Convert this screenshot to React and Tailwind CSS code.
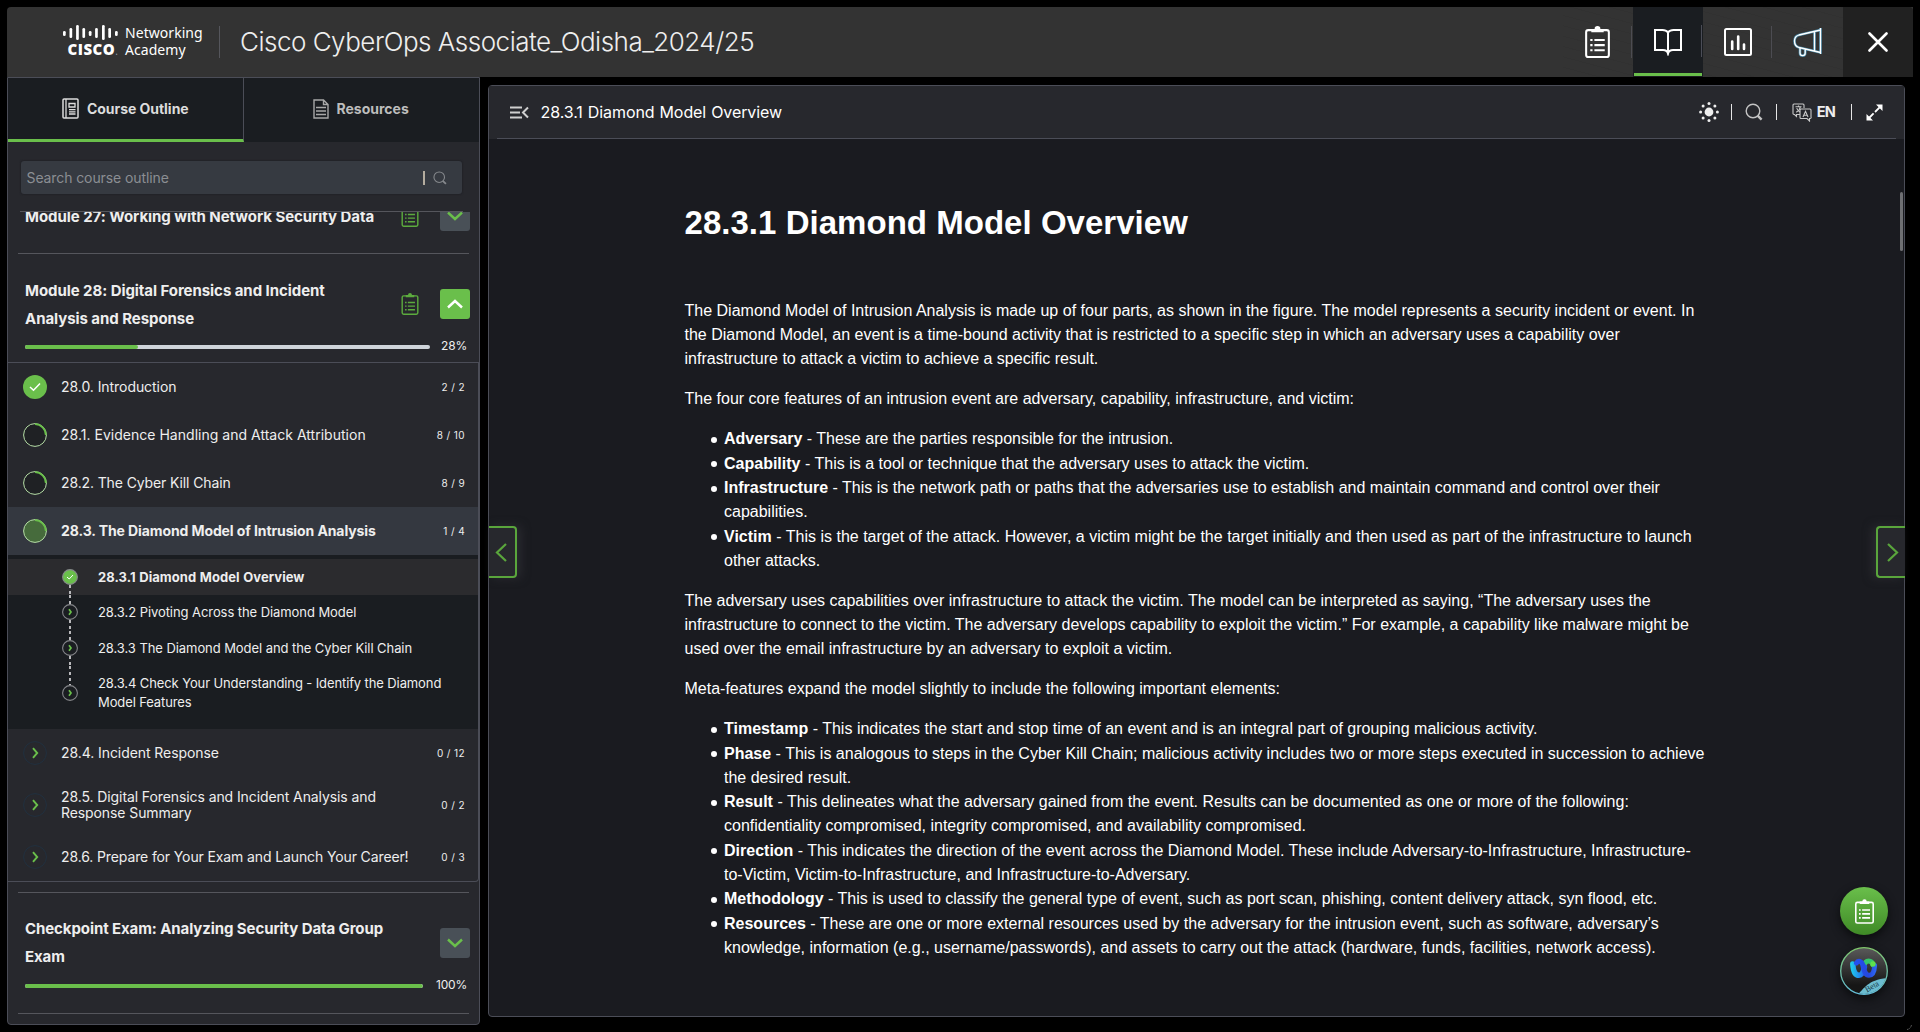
const NETACAD_BARS = [
  [0, 6, 5], [6.5, 3, 10], [13.1, 0, 15], [19.4, 3, 10], [25.8, 6, 5],
  [32.1, 3, 10], [39, 0, 15], [45.3, 3, 10], [52, 6, 5],
];

function CiscoLogo() {
  return (
    <div className="flex h-[34px] w-[142px] items-start text-white">
      <div className="flex w-[62px] shrink-0 flex-col items-start">
        <svg width="56" height="16" viewBox="0 0 56 16" fill="#fff">
          {NETACAD_BARS.map(([x, y, h]) => (
            <rect key={x} x={x} y={y} width="2.7" height={h} rx="1.3" />
          ))}
        </svg>
        <div className="mt-[1px] ml-[4.5px] flex items-baseline font-['Open_Sans',sans-serif] text-[15px] leading-[15px] font-extrabold tracking-[0.5px]">
          CISCO<span className="text-[10px] font-normal text-gray-400">.</span>
        </div>
      </div>
      <div className="-mt-[1px] font-['Noto_Sans','Open_Sans',sans-serif] text-[14px] leading-[17px] tracking-[0.05px]">
        Networking
        <br />
        Academy
      </div>
    </div>
  );
}

function Clipboard({ className = '', width = 18, height = 22, stroke = 'currentColor' }) {
  return (
    <svg className={className} width={width} height={height} viewBox="0 0 24 31" fill="none" stroke={stroke} strokeWidth="2">
      <rect x="1" y="4" width="22" height="26" rx="2" />
      <path d="M6 2.8H9.2A2.8 2.8 0 0 1 14.8 2.8H18V6H6Z" fill={stroke} stroke="none" />
      <path d="M9 13.5H19M9 18.5H19M9 23.5H19" />
      <path d="M5 13.5H7.2M5 18.5H7.2M5 23.5H7.2" />
    </svg>
  );
}

function Search({ size, stroke, className = '' }) {
  return (
    <svg className={className} width={size} height={size} viewBox="0 0 18 18" fill="none" stroke={stroke} strokeWidth="1.4">
      <circle cx="8" cy="8" r="6.8" />
      <path d="M12.6 12.6L16.6 16.6" strokeWidth="2.4" />
    </svg>
  );
}

const MEGAPHONE = 'M27.5 1V27M27.5 3L6 8C2.5 9 1.5 11 1.5 14S2.5 19.5 6 20.5L27.5 25.5M21.5 4.5V24M7 21V26A2.6 2.6 0 0 0 12.2 26V22';

function Header() {
  return (
    <header className="flex h-[70px] shrink-0 items-stretch rounded-t-[4px] bg-[#333333]">
      <div className="flex flex-1 items-center">
        <div className="ml-[56px]"><CiscoLogo /></div>
        <div className="ml-[14px] h-8 w-px bg-[#55565c]" />
        <h1 className="ml-[20px] text-[26px] leading-none font-[330] tracking-[-0.5px] whitespace-nowrap text-[#eeeeee]">
          Cisco CyberOps Associate_Odisha_2024/25
        </h1>
      </div>
      <nav className="flex bg-[repeating-linear-gradient(15deg,#333333_0_9px,#313131_9px_10px)] text-white">
        <div className="flex w-[68px] items-center justify-center">
          <Clipboard width={25} height={32} />
        </div>
        <div className="my-[19px] mr-px w-px bg-[#4c4c52]" />
        <div className="flex w-[70px] flex-col bg-[#1a1d21]">
          <div className="flex flex-1 items-center pt-[3px]">
            <svg className="ml-[20px]" width="30" height="28" viewBox="0 0 30 28" fill="none" stroke="#fff" strokeWidth="2">
              <path d="M15 4.5C13.5 2.6 11.5 2 9.5 2H2V22H10C12.5 22 14.2 22.8 15 25.5C15.8 22.8 17.5 22 20 22H28V2H20.5C18.5 2 16.5 2.6 15 4.5ZM15 4.5V26.5" />
            </svg>
            <div className="-mt-[1px] mr-px ml-auto h-8 w-px bg-[#4b4d57]" />
          </div>
          <div className="mx-px mb-px h-[3px] bg-[#6abf4b]" />
        </div>
        <div className="flex w-[68px] items-center justify-center pl-[2px]">
          <svg width="28" height="28" viewBox="0 0 28 28" fill="none" stroke="#fff">
            <rect x="1" y="1" width="26" height="26" rx="1.5" strokeWidth="2" />
            <path d="M8.2 13.5V21M14.2 8.5V21M20 16.5V21" strokeWidth="2.6" strokeLinecap="round" />
          </svg>
        </div>
        <div className="my-[19px] w-px bg-[#4c4c52]" />
        <div className="flex w-[71px] items-center justify-center">
          <svg width="30" height="30" viewBox="0 0 30 30" fill="none" strokeLinejoin="round">
            <path d={MEGAPHONE} stroke="#4a8aa8" strokeWidth="2.7" />
            <path d={MEGAPHONE} stroke="#fff" strokeWidth="1.3" />
          </svg>
        </div>
        <div className="flex w-[70px] items-center justify-center rounded-tr-[4px] bg-[#212121]">
          <svg width="20" height="20" viewBox="0 0 20 20" stroke="#fff" strokeWidth="2.6" strokeLinecap="round">
            <path d="M1.5 1.5L18.5 18.5M18.5 1.5L1.5 18.5" />
          </svg>
        </div>
      </nav>
    </header>
  );
}

function Toggle({ open, className = '' }) {
  return (
    <div className={`flex h-[30px] w-[30px] shrink-0 items-center justify-center rounded-[3px] ${open ? 'bg-[#6abf4b]' : 'bg-[#495057]'} ${className}`}>
      <svg width="16" height="10" viewBox="0 0 16 10" fill="none" stroke={open ? '#fff' : '#6abf4b'} strokeWidth="2.4">
        <path d={open ? 'M1 8.5L8 2L15 8.5' : 'M1 1.5L8 8L15 1.5'} />
      </svg>
    </div>
  );
}

function Ring({ state }) {
  if (state === 'done') {
    return (
      <svg width="24" height="24" viewBox="0 0 24 24">
        <circle cx="12" cy="12" r="12" fill="#6abf4b" />
        <path d="M7 12L10.5 15.3L17 8.5" fill="none" stroke="#fff" strokeWidth="1.5" />
      </svg>
    );
  }
  if (state === 'next') {
    return (
      <svg width="24" height="24" viewBox="0 0 24 24" fill="none">
        <circle cx="12" cy="12" r="11.4" stroke="#21303f" />
        <path d="M10 7.2L14.2 12L10 16.8" stroke="#6abf4b" strokeWidth="1.9" />
      </svg>
    );
  }
  return (
    <svg width="24" height="24" viewBox="0 0 24 24">
      <circle cx="12" cy="12" r="11.4" fill={state === 'active' ? '#466b3c' : '#1f2124'} stroke="#b5dda6" strokeWidth="1" />
      <path d="M12 1.2A10.8 10.8 0 0 1 22.8 12" fill="none" stroke="#6abf4b" strokeWidth="1.8" />
    </svg>
  );
}

function Section({ state, title, count, tall, tracking = 'tracking-[-0.09px]' }) {
  const active = state === 'active';
  return (
    <div className={`flex shrink-0 items-center pr-[13px] pl-[15px] ${tall ? 'h-[56px]' : 'h-[48px]'} ${active ? 'bg-[#343840]' : ''}`}>
      <Ring state={state} />
      <div className={`ml-[14px] flex-1 text-[14px] leading-[16px] whitespace-nowrap ${active ? 'font-bold' : ''} ${tracking}`}>{title}</div>
      <div className="text-[10px] tracking-[0.4px]">{count}</div>
    </div>
  );
}

const DASH = 'w-[2px] bg-[repeating-linear-gradient(to_bottom,#b8b8bb_0_3px,transparent_3px_6px)]';

function Lesson({ title, done, last, tracking = 'tracking-[-0.07px]' }) {
  const height = done ? 'h-[36px]' : last ? 'h-[63px]' : 'h-[35.5px]';
  return (
    <div className={`flex shrink-0 ${height} ${done ? 'bg-[#2b2b2e]' : ''}`}>
      <div className={`ml-[54px] flex w-[16px] flex-col items-center ${height}`}>
        <div className={done ? 'h-[10px]' : `${DASH} ${last ? 'h-[19px]' : 'h-[9px]'}`} />
        <svg className="shrink-0" width="16" height="16" viewBox="0 0 16 16" fill="none">
          <circle cx="8" cy="8" r="7.4" fill={done ? '#6abf4b' : '#1a1d21'} stroke="#85868a" strokeWidth="1.1" />
          {done ? <path d="M5 8L7.2 10L11 6" stroke="#fff" strokeWidth="1" /> : <path d="M7 5.3L9 8L7 10.7" stroke="#6abf4b" strokeWidth="1.7" />}
        </svg>
        {!last && <div className={`flex-1 ${DASH}`} />}
      </div>
      <div className={`ml-[20px] text-[13px] leading-[19px] whitespace-nowrap ${done ? 'pt-[8.5px] font-bold' : 'pt-[8px]'} ${tracking}`}>{title}</div>
    </div>
  );
}

function Progress({ value, label, fill }) {
  return (
    <div className="flex h-4 items-center pr-[12px] pl-[17px]">
      <div className="h-1 flex-1 overflow-hidden rounded-full bg-[#cfd4da]">
        <div className={`h-full rounded-r-full bg-[#6abf4b] ${fill}`} />
      </div>
      <div className={`-mt-[2px] text-right text-[12px] leading-4 tracking-[-0.2px] ${value}`}>{label}</div>
    </div>
  );
}

function Sidebar() {
  return (
    <aside className="flex w-[473px] shrink-0 flex-col overflow-hidden rounded-b-[4px] border border-[#4b4d57] bg-[#27282d] text-[#eeeeee]">
      <div className="flex h-[64px] shrink-0 text-[14px] font-bold">
        <div className="flex w-[236px] items-center border-r border-b-[3px] border-r-[#4b4d57] border-b-[#6abf4b] bg-[#1a1d21] pl-[54px] text-[#dcdcdc]">
          <svg width="17" height="21" viewBox="0 0 17 21" fill="none" stroke="#dcdcdc" strokeWidth="1.5">
            <rect x="1" y="1" width="15" height="19" rx="1" />
            <path d="M4 1V20M7 5.5H13V9H7ZM7 11.7H13.5M7 13.9H13.5M7 16H13.5" strokeWidth="1.3" />
          </svg>
          <span className="ml-[8px] tracking-[-0.04px]">Course Outline</span>
        </div>
        <div className="flex flex-1 items-center bg-[#1a1d21] pb-[3px] pl-[69px] text-[#bdbdbd]">
          <svg width="16" height="20" viewBox="0 0 16 20" fill="none" stroke="#a8a8a8" strokeWidth="1.4">
            <path d="M1 1H10.5L15 5.5V19H1ZM10.5 1V5.5H15M3 8.5H13M3 12H13M3 15.5H13" />
          </svg>
          <span className="ml-[7.5px]">Resources</span>
        </div>
      </div>

      <div className="mt-[19px] mr-[17px] ml-[13px] flex h-[33px] shrink-0 items-center rounded-[3px] bg-[#363a41] pr-[15px] pl-[5.5px] shadow-[0_0_2px_#17181b]">
        <span className="flex-1 text-[14px] tracking-[-0.1px] text-[#8b8e93]">Search course outline</span>
        <div className="mr-[8px] h-[14px] w-[2px] bg-[#b4ac9f]" />
        <Search size={14} stroke="#85888c" />
      </div>
      <div className="mt-[17px] mr-[16px] ml-[12px] h-px shrink-0 bg-[#55565c]" />

      <div className="flex min-h-0 flex-1 flex-col overflow-hidden">
        <div className="-mt-[13px] flex h-[54px] shrink-0 items-start">
          <div className="ml-[17px] w-[375.5px] pt-[4px] text-[15px] leading-[28px] font-bold tracking-[-0.05px] whitespace-nowrap">
            Module 27: Working with Network Security Data
          </div>
          <Clipboard className="mt-[6px] text-[#5cab3e]" />
          <Toggle className="mt-[2px] ml-[21.5px]" />
        </div>
        <div className="mr-[10px] ml-[10px] h-px shrink-0 bg-[#55565c]" />

        <div className="flex h-[85px] shrink-0 pt-[23px]">
          <div className="ml-[17px] w-[375.5px] text-[15px] leading-[28px] font-bold tracking-[-0.06px]">
            Module 28: Digital Forensics and Incident
            <br />
            Analysis and Response
          </div>
          <Clipboard className="mt-[16px] text-[#5cab3e]" />
          <Toggle open className="mt-[12px] ml-[21.5px]" />
        </div>
        <Progress value="w-[37px]" label="28%" fill="w-[28%]" />

        <div className="mt-[7px] flex h-[520px] shrink-0 flex-col rounded-br-[4px] border-t border-r border-b border-[#4b4d57]">
          <Section state="done" title="28.0. Introduction" count="2 / 2" tracking="tracking-[-0.06px]" />
          <Section state="part" title="28.1. Evidence Handling and Attack Attribution" count="8 / 10" tracking="tracking-[0.02px]" />
          <Section state="part" title="28.2. The Cyber Kill Chain" count="8 / 9" tracking="tracking-[-0.12px]" />
          <Section state="active" title="28.3. The Diamond Model of Intrusion Analysis" count="1 / 4" tracking="tracking-[-0.1px]" />
          <div className="flex h-[174px] shrink-0 flex-col bg-[#1a1d21] pt-[4px]">
            <Lesson done title="28.3.1 Diamond Model Overview" tracking="tracking-[0.04px] [word-spacing:0.6px]" />
            <Lesson title="28.3.2 Pivoting Across the Diamond Model" />
            <Lesson title="28.3.3 The Diamond Model and the Cyber Kill Chain" />
            <Lesson last title={<>28.3.4 Check Your Understanding - Identify the Diamond<br />Model Features</>} tracking="tracking-[-0.11px]" />
          </div>
          <Section state="next" title="28.4. Incident Response" count="0 / 12" tracking="tracking-[-0.07px]" />
          <Section state="next" tall title={<>28.5. Digital Forensics and Incident Analysis and<br />Response Summary</>} count="0 / 2" />
          <Section state="next" title="28.6. Prepare for Your Exam and Launch Your Career!" count="0 / 3" tracking="tracking-[-0.12px]" />
        </div>
        <div className="mt-[10px] mr-[10px] ml-[10px] h-px shrink-0 bg-[#55565c]" />

        <div className="flex h-[85px] shrink-0 pt-[22px]">
          <div className="ml-[17px] w-[415px] text-[15px] leading-[28px] font-bold tracking-[-0.09px]">
            Checkpoint Exam: Analyzing Security Data Group
            <br />
            Exam
          </div>
          <Toggle className="mt-[13px]" />
        </div>
        <Progress value="w-[44px]" label="100%" fill="w-full" />
        <div className="mt-[19px] mr-[10px] ml-[10px] h-px shrink-0 bg-[#55565c]" />
      </div>
    </aside>
  );
}

function Bar({ className }) {
  return <div className={`h-4 w-px bg-[#e5e5e5] ${className}`} />;
}

function ContentBar() {
  return (
    <div className="flex h-[53px] shrink-0 items-stretch bg-[#27282d] px-2">
      <div className="flex flex-1 items-center border-b border-[#4b4d57] pr-[13px] pl-[13px] text-[#eeeeee]">
        <svg width="19" height="13" viewBox="0 0 19 13" fill="none" stroke="#cfcfcf" strokeWidth="2">
          <path d="M0 1.5H12M0 6.5H10M0 11.5H12M18 1.5L13 6.5L18 11.5" />
        </svg>
        <h2 className="ml-[11.5px] flex-1 text-[16px] tracking-[-0.08px] text-white [word-spacing:0.6px]">28.3.1 Diamond Model Overview</h2>
        <svg width="20" height="20" viewBox="0 0 20 20" fill="#eeeeee">
          <circle cx="10" cy="10" r="4.4" />
          {[[10, 1.6], [15.9, 4.1], [18.4, 10], [15.9, 15.9], [10, 18.4], [4.1, 15.9], [1.6, 10], [4.1, 4.1]].map(([x, y]) => (
            <circle key={`${x}-${y}`} cx={x} cy={y} r="1.5" />
          ))}
        </svg>
        <Bar className="ml-[12px]" />
        <Search className="ml-[13px]" size={18} stroke="#c4c4c4" />
        <Bar className="ml-[13px]" />
        <svg className="ml-[15px]" width="20" height="19" viewBox="0 0 20 19" fill="none" stroke="#c8c8c8" strokeWidth="1.1">
          <path d="M8 11.5H4.5V13.5L2.5 11.5H2A1 1 0 0 1 1 10.5V2A1 1 0 0 1 2 1H11A1 1 0 0 1 12 2V5" />
          <path d="M3.5 3.8H9.5M6.5 2.5V3.8M4.2 9.3C6.5 8 8 6 8.3 4M4.7 5.2C5.3 7 6.8 8.4 8 9" />
          <path d="M9 6H18A1 1 0 0 1 19 7V14A1 1 0 0 1 18 15.5H17.5V18L15 15.5H9A1 1 0 0 1 8 14.5V7A1 1 0 0 1 9 6ZM11 14L13.5 8.3L16 14M11.8 12.2H15.2" />
        </svg>
        <span className="-mt-[1px] ml-[5px] text-[14.5px] font-bold tracking-[-0.8px]">EN</span>
        <Bar className="ml-[16px]" />
        <svg className="ml-[14px]" width="17" height="17" viewBox="0 0 17 17" fill="#fff" stroke="#fff">
          <path d="M3 14L14 3" strokeWidth="1.8" strokeDasharray="6.5 2" />
          <path d="M10 .5H16.5V7ZM.5 10V16.5H7Z" stroke="none" />
        </svg>
      </div>
    </div>
  );
}

function Bullets({ items }) {
  return (
    <ul className="mt-4 pl-[26.5px]">
      {items.map(([term, ...lines]) => (
        <li key={term} className="flex items-start pb-[0.5px]">
          <span className="mt-[9.5px] mr-[7px] h-[6px] w-[6px] shrink-0 rounded-full bg-white" />
          <div>
            <strong>{term}</strong> - {lines.map((l, i) => <span key={l}>{i > 0 && <br />}{l}</span>)}
          </div>
        </li>
      ))}
    </ul>
  );
}

function Article() {
  return (
    <article className="ml-[195.5px] font-['Liberation_Sans',Arial,sans-serif] text-[16px] leading-6 tracking-[0.005px] whitespace-nowrap text-white">
      <h1 className="pt-[60px] text-[33px] leading-[48px] font-bold tracking-[0.03px]">28.3.1 Diamond Model Overview</h1>
      <p className="mt-[52px]">
        The Diamond Model of Intrusion Analysis is made up of four parts, as shown in the figure. The model represents a security incident or event. In
        <br />
        the Diamond Model, an event is a time-bound activity that is restricted to a specific step in which an adversary uses a capability over
        <br />
        infrastructure to attack a victim to achieve a specific result.
      </p>
      <p className="mt-4">The four core features of an intrusion event are adversary, capability, infrastructure, and victim:</p>
      <Bullets
        items={[
          ['Adversary', 'These are the parties responsible for the intrusion.'],
          ['Capability', 'This is a tool or technique that the adversary uses to attack the victim.'],
          ['Infrastructure', 'This is the network path or paths that the adversaries use to establish and maintain command and control over their', 'capabilities.'],
          ['Victim', 'This is the target of the attack. However, a victim might be the target initially and then used as part of the infrastructure to launch', 'other attacks.'],
        ]}
      />
      <p className="mt-4">
        The adversary uses capabilities over infrastructure to attack the victim. The model can be interpreted as saying, “The adversary uses the
        <br />
        infrastructure to connect to the victim. The adversary develops capability to exploit the victim.” For example, a capability like malware might be
        <br />
        used over the email infrastructure by an adversary to exploit a victim.
      </p>
      <p className="mt-4">Meta-features expand the model slightly to include the following important elements:</p>
      <Bullets
        items={[
          ['Timestamp', 'This indicates the start and stop time of an event and is an integral part of grouping malicious activity.'],
          ['Phase', 'This is analogous to steps in the Cyber Kill Chain; malicious activity includes two or more steps executed in succession to achieve', 'the desired result.'],
          ['Result', 'This delineates what the adversary gained from the event. Results can be documented as one or more of the following:', 'confidentiality compromised, integrity compromised, and availability compromised.'],
          ['Direction', 'This indicates the direction of the event across the Diamond Model. These include Adversary-to-Infrastructure, Infrastructure-', 'to-Victim, Victim-to-Infrastructure, and Infrastructure-to-Adversary.'],
          ['Methodology', 'This is used to classify the general type of event, such as port scan, phishing, content delivery attack, syn flood, etc.'],
          ['Resources', 'These are one or more external resources used by the adversary for the intrusion event, such as software, adversary’s', 'knowledge, information (e.g., username/passwords), and assets to carry out the attack (hardware, funds, facilities, network access).'],
        ]}
      />
    </article>
  );
}

function Floating() {
  return (
    <>
      <div className="absolute top-[440px] left-0 flex h-[52px] w-[28px] items-center rounded-r-[4px] border-2 border-l-0 border-[#5aa63c] bg-[#27282d] pl-[6px] shadow-[4px_0_10px_#2a2b30]">
        <svg width="12" height="19" viewBox="0 0 12 19" fill="none" stroke="#5aa63c" strokeWidth="2.2"><path d="M11 1L2 9.5L11 18" /></svg>
      </div>
      <div className="absolute top-[440px] -right-px flex h-[52px] w-[29px] items-center justify-end rounded-l-[4px] border-2 border-r-0 border-[#5aa63c] bg-[#27282d] pr-[6px] shadow-[-4px_0_10px_#2a2b30]">
        <svg width="12" height="19" viewBox="0 0 12 19" fill="none" stroke="#5aa63c" strokeWidth="2.2"><path d="M1 1L10 9.5L1 18" /></svg>
      </div>
      <div className="absolute top-[106px] right-[1px] h-[59px] w-[3px] rounded-full bg-[#6f7073]" />
      <div className="absolute right-[16px] bottom-[81px] flex h-12 w-12 items-center justify-center rounded-full bg-linear-to-b from-[#6abf4b] to-[#3f8a26] shadow-[0_4px_10px_#0b0c0e]">
        <Clipboard width={19} height={25} className="text-white" />
      </div>
      <div className="absolute right-[16px] bottom-[21px] h-12 w-12 rounded-full shadow-[0_4px_10px_#0b0c0e]">
        <svg width="48" height="48" viewBox="0 0 48 48" fill="none">
          <defs>
            <linearGradient id="orb" x1="0" y1="0" x2="0" y2="1"><stop stopColor="#5a5a5a" /><stop offset=".8" stopColor="#161616" /></linearGradient>
            <linearGradient id="rim" x1="0" y1="0" x2="0" y2="1"><stop stopColor="#7fc56a" /><stop offset="1" stopColor="#62bcd8" /></linearGradient>
            <linearGradient id="left" x1="10" y1="0" x2="28" y2="0" gradientUnits="userSpaceOnUse"><stop stopColor="#1fd3ea" /><stop offset=".6" stopColor="#2280ee" /><stop offset="1" stopColor="#2348e0" /></linearGradient>
            <linearGradient id="right" x1="16" y1="0" x2="37" y2="0" gradientUnits="userSpaceOnUse"><stop stopColor="#2450f0" /><stop offset=".6" stopColor="#2548dc" /><stop offset="1" stopColor="#2f6cf5" /></linearGradient>
            <clipPath id="disc"><circle cx="24" cy="24" r="23" /></clipPath>
          </defs>
          <circle cx="24" cy="24" r="23.4" fill="url(#orb)" />
          <path clipPath="url(#disc)" d="M17 48C24 43 26 33 48 31V48Z" fill="#6bbcd0" />
          <circle cx="24" cy="24" r="23.3" stroke="url(#rim)" strokeWidth="1.3" />
          <path d="M23.5 20C24.5 16 26 14 28.5 14C31 14 32.5 15.5 33 18" stroke="#35c56a" strokeWidth="5" strokeLinecap="round" />
          <path d="M12.8 17C13.2 24 15 28.3 19 28.3C22 28.3 23.5 25 24.5 20" stroke="url(#left)" strokeWidth="5.4" strokeLinecap="round" />
          <path d="M16.5 16C18 13.4 21.5 13.6 22.8 18C24 23 25 28.3 29 28.3C33 28.3 34.4 23 34.6 18.5" stroke="url(#right)" strokeWidth="5" strokeLinecap="round" />
          <circle cx="33" cy="17" r="2.7" fill="#5fe04c" />
          <text x="0" y="0" transform="translate(27 45.5) rotate(-30)" fontFamily="Liberation Serif, serif" fontSize="8" fill="#173a47">Beta</text>
        </svg>
      </div>
    </>
  );
}

export default function App() {
  return (
    <div className="flex h-[1032px] w-[1920px] flex-col overflow-hidden bg-black pt-[7px] pr-[7px] pl-[7px] font-['Inter','Liberation_Sans',sans-serif] antialiased">
      <div className="flex h-[1018px] flex-col">
        <Header />
        <div className="flex min-h-0 flex-1">
          <Sidebar />
          <main className="relative mt-2 mr-[8px] mb-[8px] ml-2 flex flex-1 flex-col rounded-[4px] border border-[#4b4d57] bg-[#1a1b20]">
            <ContentBar />
            <Article />
            <Floating />
          </main>
        </div>
      </div>
      <div className="flex justify-end">
        <svg width="6" height="6" viewBox="0 0 6 6" stroke="#6b6b6b" fill="none">
          <path d="M0 4.5Q3.5 4 4.5 0" strokeDasharray="1.5 1" />
        </svg>
      </div>
    </div>
  );
}
